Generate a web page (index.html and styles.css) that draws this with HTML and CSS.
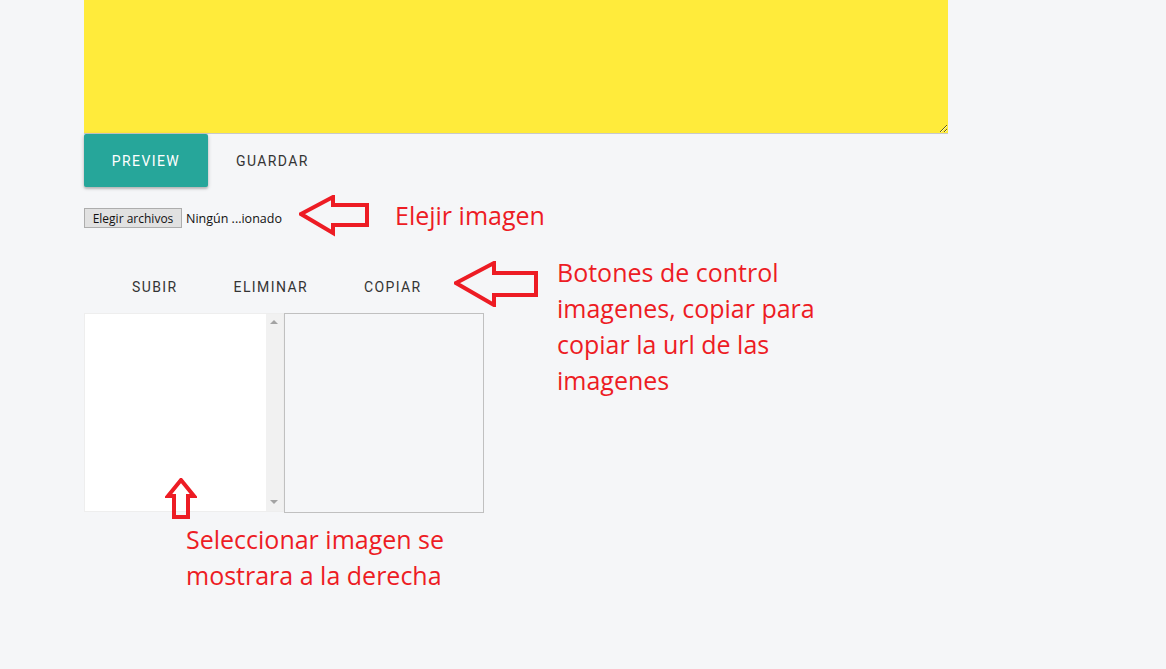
FILE: index.html
```html
<!DOCTYPE html>
<html lang="es">
<head>
<meta charset="utf-8">
<title>Editor</title>
<link rel="stylesheet" href="styles.css">
</head>
<body>
<main class="page">
  <div class="editor">
    <textarea class="editor-area"></textarea>
  </div>
  <div class="actions">
    <button class="btn btn-raised">Preview</button>
    <button class="btn btn-flat">Guardar</button>
  </div>
  <div class="file-row">
    <span class="file-btn">Elegir archivos</span>
    <span class="file-name">Ningún ...ionado</span>
  </div>
  <div class="controls">
    <button class="btn btn-flat">Subir</button>
    <button class="btn btn-flat">Eliminar</button>
    <button class="btn btn-flat">Copiar</button>
  </div>
  <div class="gallery">
    <div class="listbox">
      <div class="list-items"></div>
      <div class="scrollbar">
        <span class="arrow arrow-up"></span>
        <span class="arrow arrow-down"></span>
      </div>
    </div>
    <div class="preview"></div>
  </div>

  <svg class="note-arrow arrow-file" width="72" height="42" viewBox="0 0 72 42">
    <path d="M2 19 L34 2 L34 10 L68 10 L68 30 L34 30 L34 38 Z" fill="none" stroke="#ed1c24" stroke-width="4" stroke-linejoin="miter"/>
  </svg>
  <svg class="note-arrow arrow-controls" width="86" height="46" viewBox="0 0 86 46">
    <path d="M2 22 L40 2 L40 12 L82 12 L82 34 L40 34 L40 44 Z" fill="none" stroke="#ed1c24" stroke-width="4" stroke-linejoin="miter"/>
  </svg>
  <svg class="note-arrow arrow-list" width="32" height="42" viewBox="0 0 32 42">
    <path d="M16 2 L29 18 L23 18 L23 39 L9 39 L9 18 L3 18 Z" fill="none" stroke="#ed1c24" stroke-width="4" stroke-linejoin="miter"/>
  </svg>

  <p class="note note-file">Elejir imagen</p>
  <p class="note note-controls">Botones de control imagenes, copiar para copiar la url de las imagenes</p>
  <p class="note note-list">Seleccionar imagen se mostrara a la derecha</p>
</main>
</body>
</html>
```

FILE: styles.css
```css
html, body {
  margin: 0;
  padding: 0;
  background: #f5f6f8;
}

.page {
  position: relative;
  width: 1166px;
  height: 669px;
  padding-left: 84px;
  box-sizing: border-box;
  font-family: Roboto, "Liberation Sans", sans-serif;
}

.editor {
  width: 864px;
  height: 134px;
}

.editor-area {
  display: block;
  width: 864px;
  height: 134px;
  margin: 0;
  box-sizing: border-box;
  border: none;
  border-bottom: 1px solid #c9c9c9;
  background: #ffeb3b;
  outline: none;
  resize: vertical;
}

.actions {
  display: flex;
  height: 53px;
}

.btn {
  font-family: Roboto, "Liberation Sans", sans-serif;
  font-size: 14px;
  font-weight: 400;
  text-transform: uppercase;
  letter-spacing: 1.4px;
  border: none;
  padding: 0 28px;
  cursor: pointer;
  background: transparent;
  color: #343434;
  height: 36px;
}

.btn-raised {
  height: 53px;
  width: 124px;
  padding: 0;
  background: #26a69a;
  color: #ffffff;
  border-radius: 2px;
  box-shadow: 0 2px 2px rgba(0,0,0,0.14), 0 1px 4px rgba(0,0,0,0.2);
}

.actions .btn-flat {
  height: 53px;
}

.file-row {
  display: flex;
  align-items: center;
  gap: 4px;
  margin-top: 21px;
  height: 20px;
  font-family: "Open Sans", "Noto Sans", sans-serif;
  font-size: 12.5px;
}

.file-btn {
  display: flex;
  align-items: center;
  justify-content: center;
  box-sizing: border-box;
  width: 98px;
  height: 20px;
  background: #e1e1e1;
  border: 1px solid #adadad;
  color: #111;
  font-size: 12px;
}

.file-name {
  color: #111;
}

.controls {
  display: flex;
  margin-top: 41px;
  margin-left: 20px;
  height: 36px;
}

.gallery {
  display: flex;
  margin-top: 8px;
}

.listbox {
  display: flex;
  width: 200px;
  height: 199px;
  box-sizing: border-box;
  border: 1px solid #eeeeee;
  background: #ffffff;
}

.list-items {
  flex: 1;
}

.scrollbar {
  position: relative;
  width: 17px;
  background: #f1f1f1;
}

.arrow {
  position: absolute;
  left: 4px;
  width: 0;
  height: 0;
  border-left: 4px solid transparent;
  border-right: 4px solid transparent;
}

.arrow-up {
  top: 6px;
  border-bottom: 4px solid #a3a3a3;
}

.arrow-down {
  bottom: 7px;
  border-top: 4px solid #a3a3a3;
}

.preview {
  width: 200px;
  height: 200px;
  box-sizing: border-box;
  border: 1px solid #c0c0c0;
  background: #f5f6f8;
}

.note-arrow {
  position: absolute;
}

.arrow-file {
  left: 299px;
  top: 195px;
}

.arrow-controls {
  left: 454px;
  top: 261px;
}

.arrow-list {
  left: 165px;
  top: 478px;
}

.note {
  position: absolute;
  margin: 0;
  color: #ed1c24;
  font-family: "Open Sans", "Noto Sans", sans-serif;
  font-size: 25px;
  line-height: 36px;
}

.note-file {
  left: 395px;
  top: 197px;
}

.note-controls {
  left: 557px;
  top: 254px;
  width: 290px;
}

.note-list {
  left: 186px;
  top: 521px;
  width: 290px;
}
```
